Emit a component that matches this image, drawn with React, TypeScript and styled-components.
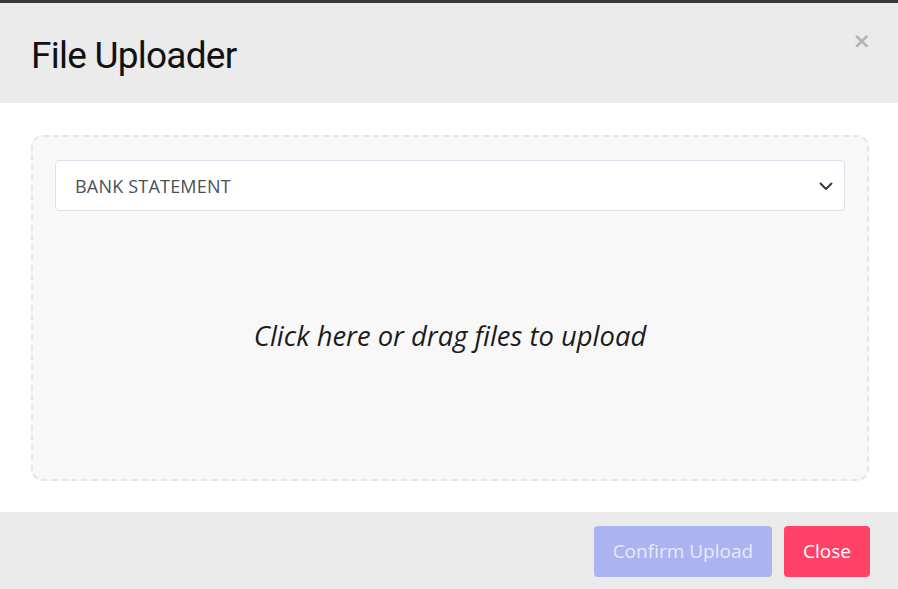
import React from "react";
import styled, { createGlobalStyle } from "styled-components";

const Global = createGlobalStyle`
  html, body { margin: 0; padding: 0; background: #ffffff; }
  body { font-family: "Noto Sans", "Open Sans", sans-serif; }
  * { box-sizing: border-box; }
`;

const Modal = styled.div`
  width: 898px;
  height: 589px;
  display: flex;
  flex-direction: column;
  border-top: 3px solid #3b3b3b;
  background: #ffffff;
`;

const Header = styled.header`
  height: 100px;
  background: #ebebeb;
  display: flex;
  align-items: center;
  justify-content: space-between;
  padding: 0 28px 0 31px;
  position: relative;
`;

const Title = styled.h1`
  margin: 0;
  font-family: Roboto, "Noto Sans", sans-serif;
  font-weight: 400;
  font-size: 37px;
  color: #111111;
  letter-spacing: -0.75px;
  margin-top: 4px;
`;

const CloseX = styled.button`
  position: absolute;
  top: 27px;
  right: 27px;
  border: none;
  background: transparent;
  padding: 0;
  font-family: "DejaVu Sans", sans-serif;
  font-weight: 700;
  font-size: 22px;
  line-height: 1;
  color: #b5b5b5;
  cursor: pointer;
`;

const Body = styled.main`
  flex: 1;
  padding: 32px 29px 31px 31px;
  display: flex;
`;

const DropZone = styled.div`
  flex: 1;
  border: 2px dashed #e4e7eb;
  border-radius: 12px;
  background: #f8f8f8;
  padding: 23px 22px 0 22px;
  display: flex;
  flex-direction: column;
`;

const SelectBox = styled.div`
  height: 51px;
  border: 1px solid #dbe0ea;
  border-radius: 4px;
  background: #ffffff;
  display: flex;
  align-items: center;
  justify-content: space-between;
  padding: 0 10px 0 19px;
  font-family: "Open Sans", "Noto Sans", sans-serif;
  font-size: 18px;
  letter-spacing: 0.2px;
  color: #495057;
`;

const DropText = styled.div`
  flex: 1;
  display: flex;
  align-items: center;
  justify-content: center;
  padding-bottom: 20px;
  font-family: "Open Sans", "Noto Sans", sans-serif;
  font-style: italic;
  font-size: 27.4px;
  color: #1c1c1c;
`;

const Footer = styled.footer`
  height: 77px;
  background: #ebebeb;
  display: flex;
  align-items: center;
  justify-content: flex-end;
  gap: 12px;
  padding: 1px 28px 0 0;
`;

const Button = styled.button<{ $variant: "primary" | "danger" }>`
  height: 51px;
  border: none;
  border-radius: 4px;
  padding: 0 19px;
  font-family: "Open Sans", "Noto Sans", sans-serif;
  font-size: 19px;
  background: ${(p) => (p.$variant === "primary" ? "#abb4f0" : "#ff4266")};
  color: ${(p) => (p.$variant === "primary" ? "#e8eafb" : "#ffffff")};
  cursor: pointer;
`;

export default function App() {
  return (
    <>
      <Global />
      <Modal>
        <Header>
          <Title>File Uploader</Title>
          <CloseX aria-label="close">×</CloseX>
        </Header>
        <Body>
          <DropZone>
            <SelectBox>
              <span>BANK STATEMENT</span>
              <svg width="16" height="16" viewBox="0 0 16 16" fill="none">
                <path d="M2.5 5.5 8 11l5.5-5.5" stroke="#343a40" strokeWidth="2" strokeLinecap="round" strokeLinejoin="round" />
              </svg>
            </SelectBox>
            <DropText>Click here or drag files to upload</DropText>
          </DropZone>
        </Body>
        <Footer>
          <Button $variant="primary">Confirm Upload</Button>
          <Button $variant="danger">Close</Button>
        </Footer>
      </Modal>
    </>
  );
}
